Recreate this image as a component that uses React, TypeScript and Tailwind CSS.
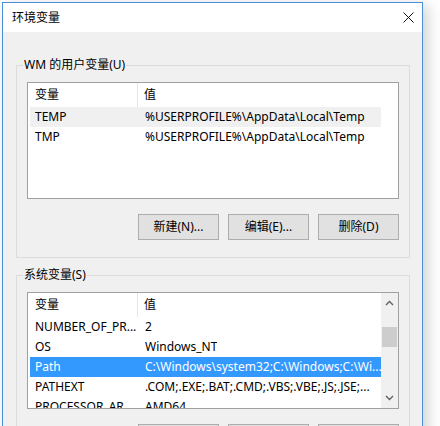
import React from "react";

const font = { fontFamily: '"Noto Sans", "Noto Sans CJK SC", sans-serif' };

type Row = { name: string; value: string; state?: "hover" | "selected" };

const userVars: Row[] = [
  { name: "TEMP", value: "%USERPROFILE%\\AppData\\Local\\Temp", state: "hover" },
  { name: "TMP", value: "%USERPROFILE%\\AppData\\Local\\Temp" },
];

const systemVars: Row[] = [
  { name: "NUMBER_OF_PR...", value: "2" },
  { name: "OS", value: "Windows_NT" },
  { name: "Path", value: "C:\\Windows\\system32;C:\\Windows;C:\\Wi...", state: "selected" },
  { name: "PATHEXT", value: ".COM;.EXE;.BAT;.CMD;.VBS;.VBE;.JS;.JSE;..." },
  { name: "PROCESSOR_AR...", value: "AMD64" },
];

function Scrollbar() {
  return (
    <div className="w-[17px] h-full bg-[#f0f0f0] flex flex-col items-center shrink-0">
      <div className="h-[20px] w-full flex items-center justify-center">
        <svg width="9" height="6" viewBox="0 0 9 6">
          <path d="M1 5 L4.5 1.5 L8 5" fill="none" stroke="#606060" strokeWidth="1.4" />
        </svg>
      </div>
      <div className="h-[14px]" />
      <div className="w-[15px] h-[20px] bg-[#cdcdcd]" />
      <div className="flex-1" />
      <div className="h-[20px] w-full flex items-center justify-center">
        <svg width="9" height="6" viewBox="0 0 9 6">
          <path d="M1 1 L4.5 4.5 L8 1" fill="none" stroke="#606060" strokeWidth="1.4" />
        </svg>
      </div>
    </div>
  );
}

function ListView({ rows, scroll }: { rows: Row[]; scroll?: boolean }) {
  return (
    <div className="mx-[10px] h-[117px] border border-[#a0a0a0] bg-white flex overflow-hidden">
      <div className="flex-1 pl-[2px] overflow-hidden">
        <div className="w-[351px] h-[24px] flex text-[12px] leading-[16px] text-black">
          <div className="w-[108px] pl-[5px] flex items-center border-r border-[#e5e5e5]">变量</div>
          <div className="pl-[6px] flex items-center">值</div>
        </div>
        {rows.map((r) => (
          <div
            key={r.name}
            className={
              "w-[351px] h-[20px] flex items-center text-[12px] leading-[16px] whitespace-nowrap " +
              (r.state === "selected"
                ? "bg-[#3399ff] text-white"
                : r.state === "hover"
                ? "bg-[#f0f0f0] text-black"
                : "text-black")
            }
          >
            <div className="w-[108px] pl-[5px] shrink-0 overflow-hidden">{r.name}</div>
            <div className="pl-[7px] overflow-hidden">{r.value}</div>
          </div>
        ))}
      </div>
      {scroll && <Scrollbar />}
    </div>
  );
}

function Button({ label }: { label: string }) {
  return (
    <button className="w-[81px] h-[26px] bg-[#e1e1e1] border border-[#adadad] text-[12px] leading-[16px] text-black flex items-center justify-center">
      {label}
    </button>
  );
}

function Group({ title, rows, scroll }: { title: string; rows: Row[]; scroll?: boolean }) {
  return (
    <fieldset className="border border-[#dcdcdc] mx-0 p-0 m-0 min-w-0">
      <legend className="ml-[6px] px-[1px] text-[12px] leading-[16px] text-black">{title}</legend>
      <div className="pt-[9px]">
        <ListView rows={rows} scroll={scroll} />
        <div className="flex justify-end gap-[9px] pr-[10px] pt-[15px] pb-[17px]">
          <Button label="新建(N)..." />
          <Button label="编辑(E)..." />
          <Button label="删除(D)" />
        </div>
      </div>
    </fieldset>
  );
}

export default function App() {
  return (
    <div className="w-[440px] h-[426px] bg-white overflow-hidden pl-[2px] pt-[2px]" style={font}>
      <div className="w-[421px] h-[520px] border border-[#4a8fd6] bg-[#f0f0f0] flex flex-col shadow-[5px_3px_14px_rgba(0,0,0,0.18)]">
        <div className="h-[29px] bg-white flex items-center justify-between pl-[9px] pr-[8px] shrink-0">
          <span className="text-[12px] leading-[16px] text-black">环境变量</span>
          <svg width="11" height="11" viewBox="0 0 11 11">
            <path d="M0.5 0.5 L10.5 10.5 M10.5 0.5 L0.5 10.5" stroke="#111" strokeWidth="1" />
          </svg>
        </div>
        <div className="pl-[13px] pr-[12px] pt-[25px] flex flex-col gap-[9px]">
          <Group title="WM 的用户变量(U)" rows={userVars} />
          <Group title="系统变量(S)" rows={systemVars} scroll />
        </div>
      </div>
    </div>
  );
}
